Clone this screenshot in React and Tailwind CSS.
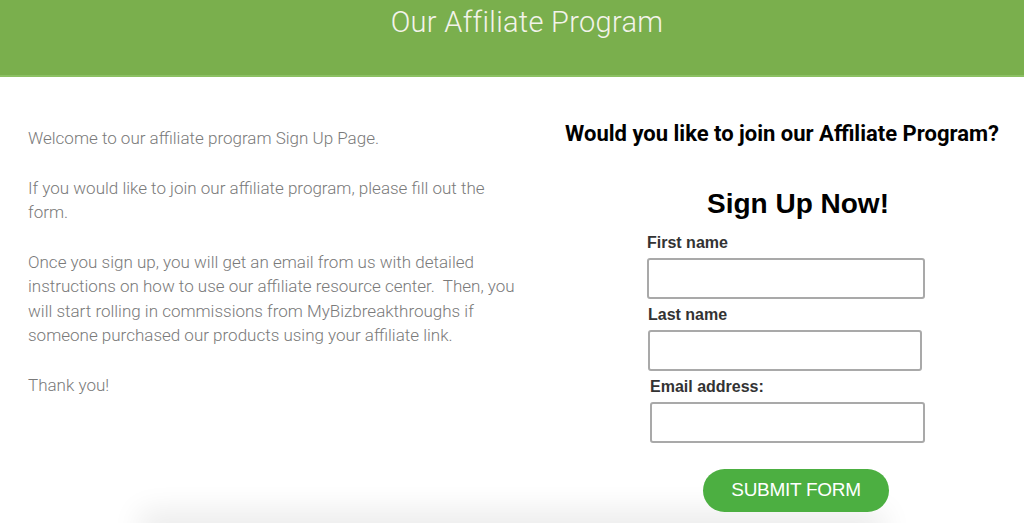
const paragraphs = [
  "Welcome to our affiliate program Sign Up Page.",
  "If you would like to join our affiliate program, please fill out the form.",
  "Once you sign up, you will get an email from us with detailed instructions on how to use our affiliate resource center.\u00a0 Then, you will start rolling in commissions from MyBizbreakthroughs if someone purchased our products using your affiliate link.",
  "Thank you!",
];

const fields = [
  { label: "First name", box: "ml-0 w-[278px]" },
  { label: "Last name", box: "ml-[1px] w-[274px]" },
  { label: "Email address:", box: "ml-[3px] w-[275px]" },
];

const App = () => {
  return (
    <div className="w-[1024px] h-[523px] overflow-hidden bg-white font-['Roboto',sans-serif]">
      {/* banner */}
      <header className="h-[77px] bg-[#7aaf4d] border-b-2 border-[#8cc063] flex justify-center">
        <h1 className="pl-[30px] pt-[2px] text-[29px] leading-[40px] font-light text-[#f3f3ea] tracking-[0.3px]">
          Our Affiliate Program
        </h1>
      </header>

      <div className="flex">
        {/* left copy */}
        <div className="w-[540px] pl-[28px] pr-[14px] pt-[49px]">
          {paragraphs.map((p, i) => (
            <p
              key={i}
              className="mb-[25px] text-[17px] leading-[24.5px] font-light text-[#7a7a7a]"
            >
              {p}
            </p>
          ))}
        </div>

        {/* sign up form */}
        <div className="flex-1 pt-[42px]">
          <h2 className="text-center text-[22px] leading-[30px] font-bold text-black">
            Would you like to join our Affiliate Program?
          </h2>

          <div className="ml-[107px] w-[282px] font-['Liberation_Sans',Arial,sans-serif]">
            <div className="mt-[39px] pl-[20px] text-center text-[28px] leading-[32px] font-bold text-black">
              Sign Up Now!
            </div>

            <form className="mt-[14px]">
              {fields.map((f, i) => (
                <div key={f.label} className={i === 0 ? "" : "mt-[7px]"}>
                  <label
                    className={`block text-[16px] leading-[18px] font-bold text-[#333] ${f.box}`}
                  >
                    {f.label}
                  </label>
                  <input
                    type="text"
                    className={`mt-[6px] block h-[41px] rounded-[3px] border-2 border-[#a9a9a9] bg-white ${f.box}`}
                  />
                </div>
              ))}

              <div className="pl-[56px] pt-[26px]">
                <button
                  type="button"
                  className="h-[43px] w-[186px] rounded-full bg-[#4caf41] text-[19px] text-white tracking-[-0.3px]"
                >
                  SUBMIT FORM
                </button>
              </div>
            </form>
          </div>
        </div>
      </div>

      {/* edge of the next section */}
      <div className="mx-[140px] mt-[14px] h-[30px] shadow-[0_-14px_30px_rgba(0,0,0,0.09)]" />
    </div>
  );
};

export default App;
